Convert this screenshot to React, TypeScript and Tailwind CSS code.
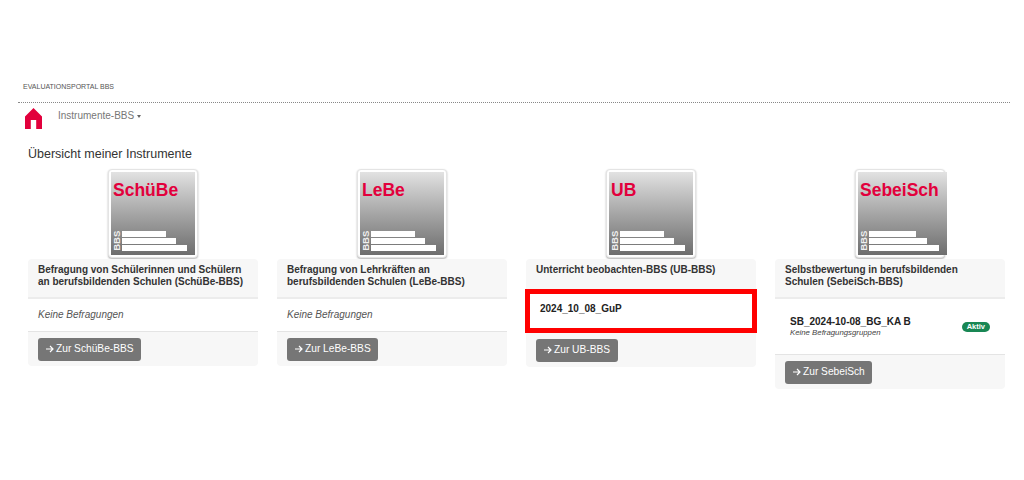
function Logo({ name }: { name: string }) {
  return (
    <div className="ml-[80px] w-[90px] h-[89px] bg-white rounded-[4px] border border-[#e4e4e4] shadow-[0_1px_2px_rgba(0,0,0,0.3)] p-[2px] flex">
      <div className="flex-1 flex flex-col justify-between bg-gradient-to-b from-[#e2e2e2] to-[#6e6e6e] pl-[2px] pr-[8px] pb-[4px] pt-[8px]">
        <div className="text-[#e2003c] text-[17.5px] leading-5 font-bold">{name}</div>
        <div className="flex gap-[1px] items-end">
          <div className="w-[8px] h-[20px] flex items-center justify-center">
            <span className="text-[#f0f0f0] text-[9.5px] leading-none font-bold -rotate-90 whitespace-nowrap">BBS</span>
          </div>
          <div className="flex-1 flex flex-col gap-[1px]">
            <div className="h-[6px] w-[67%] bg-white" />
            <div className="h-[6px] w-[83%] bg-white" />
            <div className="h-[6px] w-full bg-white" />
          </div>
        </div>
      </div>
    </div>
  )
}

function Footer({ label }: { label: string }) {
  return (
    <div className="bg-[#f7f7f7] rounded-b-[4px] px-[10px] pt-[4px] pb-[5px]">
      <div className="inline-flex h-[23px] items-center gap-[2.5px] rounded-[3px] bg-[#767676] px-[7.5px] text-[10.2px] text-white">
        <svg viewBox="0 0 8 8" className="w-[8px] h-[8px]" fill="none" stroke="white" strokeWidth="1.2">
          <path d="M0 4 H7 M4 1 L7 4 L4 7" />
        </svg>
        {label}
      </div>
    </div>
  )
}

function EmptyCard({ name, title, label }: { name: string; title: string; label: string }) {
  return (
    <div className="flex-1">
      <Logo name={name} />
      <div className="mt-[1px] bg-[#f7f7f7] rounded-t-[4px] border-b-2 border-[#ececec] h-[40px] px-[10px] pt-[5px] text-[10px] leading-[11.5px] font-bold text-[#333]">
        {title}
      </div>
      <div className="h-[33px] border-b border-[#e4e4e4] px-[10px] pb-[2px] flex items-center text-[10px] italic text-[#555]">
        Keine Befragungen
      </div>
      <Footer label={label} />
    </div>
  )
}

export default function App() {
  return (
    <div className="w-[1024px] h-[480px] bg-white pt-[82px] font-['Liberation_Sans',sans-serif] overflow-hidden">
      <div className="pl-[23px] text-[7px] leading-[10px] text-[#555]">EVALUATIONSPORTAL BBS</div>
      <div className="ml-[18px] w-[992px] mt-[10px] border-t border-dotted border-[#888]" />
      <div className="flex pl-[25px] pt-[5px] h-[31px]">
        <svg viewBox="0 0 17 21" className="w-[17px] h-[21px]" fill="#e2003c">
          <path d="M8.5 0 L17 8.5 L17 21 L11.2 21 L11.2 12 L5.8 12 L5.8 21 L0 21 L0 8.5 Z" />
        </svg>
        <div className="ml-[16px] pt-[1px] flex items-start text-[10px] leading-[14px] text-[#777]">
          Instrumente-BBS
          <span className="ml-[3px] mt-[6px] border-x-[2.5px] border-x-transparent border-t-[3px] border-t-[#666]" />
        </div>
      </div>
      <div className="pl-[28px] mt-[12px] text-[12.5px] leading-[16px] text-[#333]">Übersicht meiner Instrumente</div>
      <div className="flex items-start gap-[19px] pl-[28px] pr-[19px] mt-[7px]">
        <EmptyCard
          name="SchüBe"
          title="Befragung von Schülerinnen und Schülern an berufsbildenden Schulen (SchüBe-BBS)"
          label="Zur SchüBe-BBS"
        />
        <EmptyCard
          name="LeBe"
          title="Befragung von Lehrkräften an berufsbildenden Schulen (LeBe-BBS)"
          label="Zur LeBe-BBS"
        />
        <div className="flex-1">
          <Logo name="UB" />
          <div className="mt-[1px] bg-[#f7f7f7] rounded-t-[4px] h-[30px] px-[10px] pt-[5px] text-[10px] leading-[11.5px] font-bold text-[#333]">
            Unterricht beobachten-BBS (UB-BBS)
          </div>
          <div className="h-[44px] -mx-[1px] border-[5px] border-[#ff0000] bg-white pl-[10px] pt-[9px] text-[10px] leading-[12px] font-bold text-[#222]">
            2024_10_08_GuP
          </div>
          <Footer label="Zur UB-BBS" />
        </div>
        <div className="flex-1">
          <Logo name="SebeiSch" />
          <div className="mt-[1px] bg-[#f7f7f7] rounded-t-[4px] border-b-2 border-[#ececec] h-[40px] px-[10px] pt-[5px] text-[10px] leading-[11.5px] font-bold text-[#333]">
            Selbstbewertung in berufsbildenden Schulen (SebeiSch-BBS)
          </div>
          <div className="h-[56px] border-b border-[#e4e4e4] pl-[15px] pr-[15px] flex items-center justify-between">
            <div className="-mt-[1px]">
              <div className="text-[10px] leading-[13px] font-bold text-[#222]">SB_2024-10-08_BG_KA B</div>
              <div className="text-[7.8px] leading-[10px] italic text-[#444]">Keine Befragungsgruppen</div>
            </div>
            <span className="rounded-full bg-[#198754] px-[5px] h-[10px] flex items-center text-[7.5px] font-bold text-white">Aktiv</span>
          </div>
          <Footer label="Zur SebeiSch" />
        </div>
      </div>
    </div>
  )
}
